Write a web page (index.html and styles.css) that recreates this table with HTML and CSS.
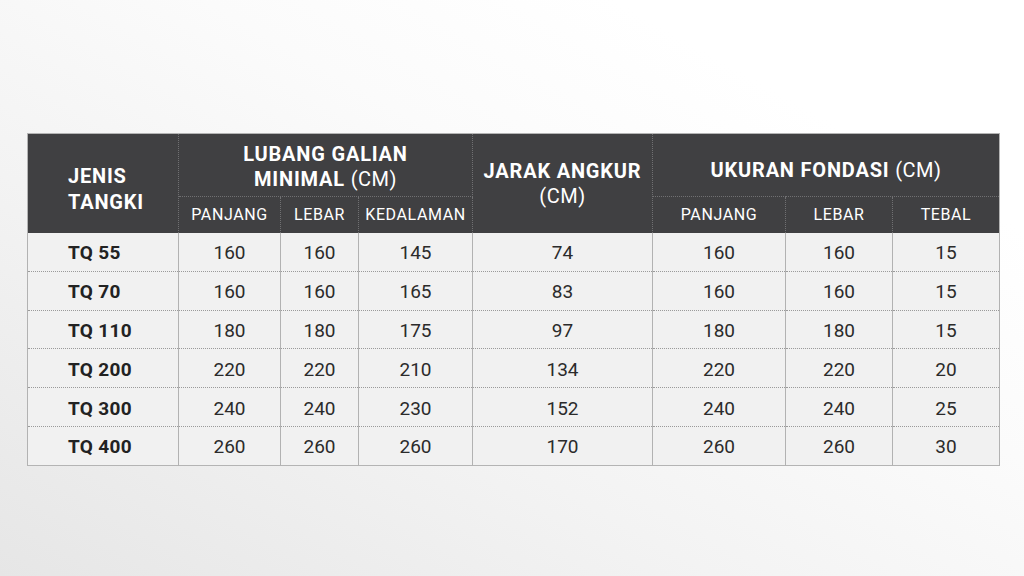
FILE: index.html
```html
<!DOCTYPE html>
<html lang="id">
<head>
<meta charset="utf-8">
<title>Ukuran Tangki</title>
<link rel="stylesheet" href="styles.css">
</head>
<body>
<main class="page">
  <table class="spec">
    <colgroup>
      <col class="c1"><col class="c2"><col class="c3"><col class="c4"><col class="c5"><col class="c6"><col class="c7"><col class="c8">
    </colgroup>
    <thead>
      <tr class="h1">
        <th rowspan="2" class="jenis">JENIS<br>TANGKI</th>
        <th colspan="3" class="group">LUBANG GALIAN<br>MINIMAL <span class="unit">(CM)</span></th>
        <th rowspan="2" class="jarak">JARAK ANGKUR<br><span class="unit">(CM)</span></th>
        <th colspan="3" class="group single">UKURAN FONDASI <span class="unit">(CM)</span></th>
      </tr>
      <tr class="h2">
        <th>PANJANG</th><th>LEBAR</th><th>KEDALAMAN</th>
        <th>PANJANG</th><th>LEBAR</th><th>TEBAL</th>
      </tr>
    </thead>
    <tbody>
      <tr><td class="name">TQ 55</td><td>160</td><td>160</td><td>145</td><td>74</td><td>160</td><td>160</td><td>15</td></tr>
      <tr><td class="name">TQ 70</td><td>160</td><td>160</td><td>165</td><td>83</td><td>160</td><td>160</td><td>15</td></tr>
      <tr><td class="name">TQ 110</td><td>180</td><td>180</td><td>175</td><td>97</td><td>180</td><td>180</td><td>15</td></tr>
      <tr><td class="name">TQ 200</td><td>220</td><td>220</td><td>210</td><td>134</td><td>220</td><td>220</td><td>20</td></tr>
      <tr><td class="name">TQ 300</td><td>240</td><td>240</td><td>230</td><td>152</td><td>240</td><td>240</td><td>25</td></tr>
      <tr><td class="name">TQ 400</td><td>260</td><td>260</td><td>260</td><td>170</td><td>260</td><td>260</td><td>30</td></tr>
    </tbody>
  </table>
</main>
</body>
</html>
```
FILE: styles.css
```css
html, body {
  margin: 0;
  padding: 0;
  width: 1024px;
  height: 576px;
  overflow: hidden;
}
body {
  background: linear-gradient(to top right, #e6e6e6 0%, #f3f3f3 35%, #fbfbfb 60%, #ffffff 80%);
  font-family: Roboto, "Liberation Sans", sans-serif;
}
.page {
  padding: 133px 25px 0 27px;
}
.spec {
  border-collapse: collapse;
  table-layout: fixed;
  width: 972px;
  border: 1px solid #b4b4b4;
}
.spec th, .spec td {
  box-sizing: border-box;
}
.c1 { width: 151px; }
.c2 { width: 102px; }
.c3 { width: 78px; }
.c4 { width: 114px; }
.c5 { width: 180px; }
.c6 { width: 133px; }
.c7 { width: 107px; }
.c8 { width: 107px; }

.spec thead th {
  background: #404042;
  color: #ffffff;
  padding: 0;
  border-left: 1px dotted #707072;
  border-right: 1px dotted #707072;
}
.h1 th {
  height: 63px;
  font-size: 20px;
  font-weight: 700;
  letter-spacing: 0.8px;
  line-height: 25px;
}
.h1 .group {
  border-bottom: 1px dotted #707072;
  padding-top: 3px;
}
.h1 .group.single {
  padding-top: 11px;
}
.h1 .jenis {
  text-align: left;
  padding-left: 40px;
  line-height: 26px;
  padding-top: 12px;
  border-left: none;
}
.h1 .jarak {
  line-height: 25px;
  padding-top: 2px;
}
.unit {
  font-weight: 400;
  letter-spacing: 0.5px;
}
.h2 th {
  height: 36px;
  font-size: 16px;
  font-weight: 400;
  letter-spacing: 0.6px;
  color: #e4e4e4;
  padding-top: 3px;
}

.spec tbody td {
  background: #f1f1f1;
  color: #2b2b2b;
  height: 38.8px;
  padding: 3px 0 0;
  text-align: center;
  font-size: 19px;
  line-height: 22px;
  font-weight: 400;
  border-left: 1px solid #b2b2b2;
  border-right: 1px solid #b2b2b2;
  border-top: 1px dotted #9a9a9a;
}
.spec tbody tr:first-child td {
  border-top: none;
}
.spec tbody td.name {
  text-align: left;
  padding-left: 40px;
  font-weight: 700;
  letter-spacing: 0.3px;
  color: #222222;
}
```
